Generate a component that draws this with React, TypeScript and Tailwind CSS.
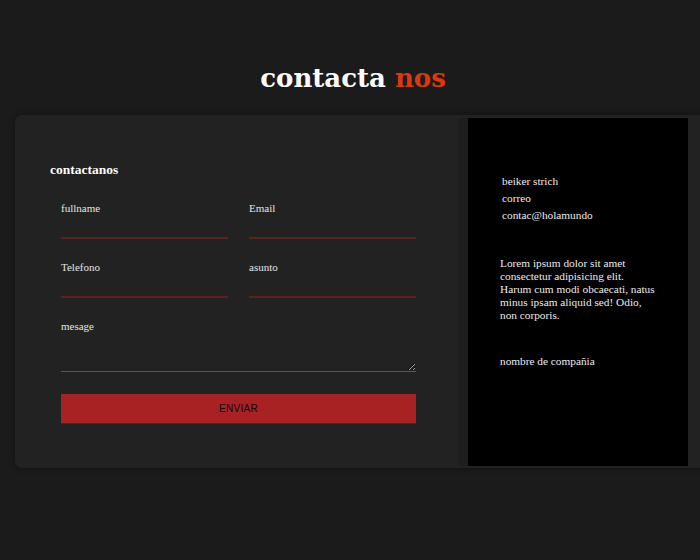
import React from "react";

const serif = { fontFamily: '"Liberation Serif", "Times New Roman", serif' };

function Field({ label }: { label: string }) {
  return (
    <div className="flex flex-col">
      <label className="text-[11px] leading-[14px] text-[#e4e4e4]">{label}</label>
      <input className="h-[24px] bg-transparent border-0 border-b-2 border-[#5e211b] outline-none text-[#eee]" />
    </div>
  );
}

export default function App() {
  return (
    <div className="w-[700px] h-[560px] overflow-hidden bg-[#1b1b1b]" style={serif}>
      <h1
        className="pt-[58px] pl-[6px] text-center text-[26px] leading-[40px] font-bold text-white"
        style={{ fontFamily: '"DejaVu Serif", "Liberation Serif", serif' }}
      >
        contacta <span className="text-[#dd380c]">nos</span>
      </h1>
      <div className="mt-[17px] ml-[15px] w-[700px] h-[353px] rounded-[7px] bg-[#222222] shadow-[0_0_6px_rgba(0,0,0,0.35)] flex pt-[3px] pb-[2px]">
        <div className="w-[443px] pl-[35px] pt-[43px]">
          <h2 className="text-[13.5px] leading-[18px] font-bold text-white">contactanos</h2>
          <div className="ml-[11px] w-[355px] mt-[22px] grid grid-cols-2 gap-x-[21px] gap-y-[21px]">
            <Field label="fullname" />
            <Field label="Email" />
            <Field label="Telefono" />
            <Field label="asunto" />
          </div>
          <div className="ml-[11px] w-[355px] mt-[21px] flex flex-col">
            <label className="text-[11px] leading-[14px] text-[#e4e4e4]">mesage</label>
            <textarea className="h-[39px] bg-transparent border-0 border-b border-[#a8391a] outline-none text-[#eee]" />
            <button
              className="mt-[22px] h-[30px] bg-[#a82224] border-b border-[#6e1616] text-[10px] tracking-[0.3px] text-[#140404]"
              style={{ fontFamily: '"Liberation Sans", Arial, sans-serif' }}
            >
              ENVIAR
            </button>
          </div>
        </div>
        <div className="w-[10px] bg-[#1e1e1e]"></div>
        <div className="w-[220px] bg-black pt-[55px] text-[#ececec] text-[11.3px]">
          <div className="pl-[34px] leading-[17px]">
            <p>beiker strich</p>
            <p>correo</p>
            <p>contac@holamundo</p>
          </div>
          <p className="pl-[32px] mt-[33px] leading-[13px]">
            Lorem ipsum dolor sit amet
            <br />
            consectetur adipisicing elit.
            <br />
            Harum cum modi obcaecati, natus
            <br />
            minus ipsam aliquid sed! Odio,
            <br />
            non corporis.
          </p>
          <p className="pl-[32px] mt-[31px] leading-[17px]">nombre de compañia</p>
        </div>
        <div className="flex-1"></div>
      </div>
    </div>
  );
}
